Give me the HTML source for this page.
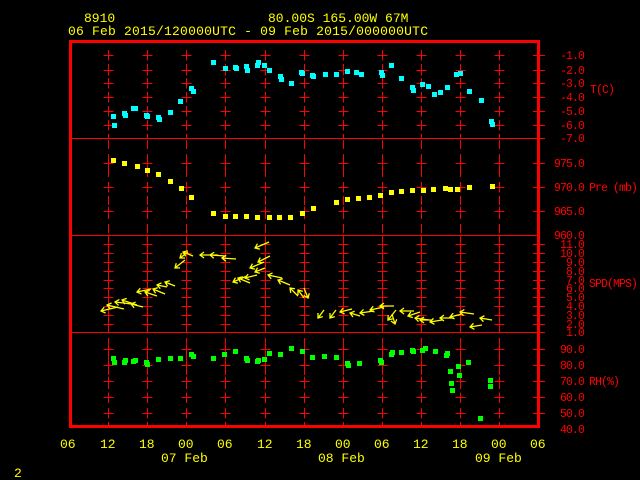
<!DOCTYPE html>
<html><head><meta charset="utf-8"><style>
html,body{margin:0;padding:0;background:#000;width:640px;height:480px;overflow:hidden}
svg{display:block}
text{font-family:"Liberation Mono",monospace;font-size:13px}
.ax text{font-size:11.5px;letter-spacing:-0.9px}
</style></head><body>
<svg width="640" height="480" viewBox="0 0 640 480" xmlns="http://www.w3.org/2000/svg">
<g fill="#ffff00">
<text x="84" y="22">8910</text>
<text x="268" y="22">80.00S  165.00W    67M</text>
<text x="68" y="35" textLength="360">06 Feb 2015/120000UTC - 09 Feb 2015/000000UTC</text>
<text x="60" y="448">06</text><text x="100" y="448">12</text><text x="139" y="448">18</text><text x="178" y="448">00</text><text x="217" y="448">06</text><text x="257" y="448">12</text><text x="296" y="448">18</text><text x="335" y="448">00</text><text x="374" y="448">06</text><text x="413" y="448">12</text><text x="452" y="448">18</text><text x="491" y="448">00</text><text x="530" y="448">06</text>
<text x="161" y="462">07 Feb</text><text x="318" y="462">08 Feb</text><text x="475" y="462">09 Feb</text>
<text x="14" y="477">2</text>
</g>
<g id="grid" stroke="#ff0000" stroke-width="1">
<g stroke-dasharray="9,5">
<path d="M108.5 50V138M147.5 50V138M186.5 50V138M225.5 50V138M265.5 50V138M304.5 50V138M343.5 50V138M382.5 50V138M421.5 50V138M460.5 50V138M499.5 50V138"/>
<path d="M108.5 140V235M147.5 140V235M186.5 140V235M225.5 140V235M265.5 140V235M304.5 140V235M343.5 140V235M382.5 140V235M421.5 140V235M460.5 140V235M499.5 140V235"/>
<path d="M108.5 338V427M147.5 338V427M186.5 338V427M225.5 338V427M265.5 338V427M304.5 338V427M343.5 338V427M382.5 338V427M421.5 338V427M460.5 338V427M499.5 338V427"/>
</g>
<path d="M108.5 235V332M147.5 235V332M186.5 235V332M225.5 235V332M265.5 235V332M304.5 235V332M343.5 235V332M382.5 235V332M421.5 235V332M460.5 235V332M499.5 235V332"/>
<path d="M70 235.5H538M70 138.5H545M70 332.5H545"/>
</g>
<g stroke="#ff0000" stroke-width="1" id="ticks"></g>
<rect x="70.5" y="41.5" width="468" height="385" fill="none" stroke="#ff0000" stroke-width="3"/>
<g fill="#ff0000" class="ax" text-anchor="end">
<text x="584" y="59">-1.0</text><text x="584" y="74">-2.0</text><text x="584" y="87">-3.0</text><text x="584" y="101">-4.0</text><text x="584" y="115">-5.0</text><text x="584" y="129">-6.0</text><text x="584" y="142">-7.0</text>
<text x="584" y="167">975.0</text><text x="584" y="191">970.0</text><text x="584" y="215">965.0</text><text x="584" y="239">960.0</text>
<text x="584" y="248">11.0</text><text x="584" y="257">10.0</text><text x="584" y="266">9.0</text><text x="584" y="275">8.0</text><text x="584" y="284">7.0</text><text x="584" y="292">6.0</text><text x="584" y="301">5.0</text><text x="584" y="310">4.0</text><text x="584" y="319">3.0</text><text x="584" y="328">2.0</text><text x="584" y="336">1.0</text>
<text x="584" y="353">90.0</text><text x="584" y="369">80.0</text><text x="584" y="385">70.0</text><text x="584" y="401">60.0</text><text x="584" y="417">50.0</text><text x="584" y="433">40.0</text>
</g>
<g fill="#ff0000" class="ax">
<text x="590" y="93">T(C)</text>
<text x="589" y="191">Pre (mb)</text>
<text x="589" y="287">SPD(MPS)</text>
<text x="589" y="385">RH(%)</text>
</g>
<g id="pts"></g>
<g id="wind" stroke="#ffff00" stroke-width="1.3" fill="none"></g>
</svg>
<script>
var NS="http://www.w3.org/2000/svg";
var gx=[108.5,147.5,186.5,225.5,265.5,304.5,343.5,382.5,421.5,460.5,499.5];
var ys=[55,70,83,97,111,125,163,187,211,244,253,262,271,280,288,297,306,315,324,349,365,381,397,413];
var t=document.getElementById('ticks'),d="";
ys.forEach(function(y){y+=.5;gx.forEach(function(x){d+="M"+(x-5)+" "+y+"H"+(x+5)+"M"+x+" "+(y-5)+"V"+(y+5);});d+="M533 "+y+"H545";});
var p=document.createElementNS(NS,'path');p.setAttribute('d',d);t.appendChild(p);
var pts=document.getElementById('pts');
function sq(arr,c){arr.forEach(function(a){var r=document.createElementNS(NS,'rect');r.setAttribute('x',a[0]-2);r.setAttribute('y',a[1]-2);r.setAttribute('width',5);r.setAttribute('height',5);r.setAttribute('fill',c);pts.appendChild(r);});}
sq([[113,116],[114,125],[124,113],[125,115],[133,108],[135,108],[146,115],[147,116],[158,117],[159,119],[170,112],[180,101],[191,88],[193,91],[213,62],[225,68],[235,67],[236,68],[246,66],[247,70],[257,65],[258,62],[264,65],[269,70],[280,76],[281,79],[291,83],[301,72],[302,73],[312,75],[313,76],[325,74],[336,74],[347,71],[356,72],[361,74],[381,72],[382,75],[391,65],[401,78],[412,87],[413,90],[422,84],[428,86],[434,94],[440,92],[447,87],[456,74],[460,73],[469,91],[481,100],[491,121],[492,124]],"#00ffff");
sq([[113,160],[124,163],[137,166],[147,170],[158,174],[170,181],[181,188],[191,197],[213,213],[225,216],[235,216],[246,216],[257,217],[269,217],[279,217],[290,217],[302,213],[313,208],[336,202],[347,199],[358,198],[369,197],[380,195],[391,192],[401,191],[412,190],[423,190],[433,189],[445,188],[450,189],[457,189],[469,187],[492,186]],"#ffff00");
sq([[113,358],[114,362],[124,362],[125,360],[133,361],[135,360],[146,362],[147,364],[158,359],[170,358],[180,358],[191,354],[193,356],[213,358],[224,354],[235,351],[246,358],[247,360],[257,361],[258,360],[264,359],[269,353],[280,354],[291,348],[302,351],[312,357],[324,356],[336,357],[347,363],[348,365],[359,363],[380,360],[381,362],[391,354],[392,352],[401,352],[412,350],[413,351],[422,350],[425,348],[435,351],[446,355],[447,353],[450,371],[451,383],[452,390],[458,366],[459,375],[468,362],[490,380],[490,386],[480,418]],"#00ff00");
var w=document.getElementById('wind');
var ar=[[101,311,17,-4],[107,305,17,4],[115,302,17,2],[122,300,15,5],[131,304,12,3],[137,292,14,-3],[145,292,12,4],[153,289,12,5],[157,285,10,2],[165,282,10,4],[175,268,10,-8],[180,258,8,-6],[183,252,10,4],[200,255,18,0],[210,255,16,1],[222,258,14,1],[233,282,14,-6],[238,278,12,5],[245,278,12,-3],[255,272,10,-4],[250,268,14,-6],[255,248,14,-6],[258,262,12,-6],[268,275,14,3],[278,280,12,5],[290,288,8,8],[298,290,6,8],[308,298,-4,-10],[318,318,6,-8],[330,318,6,-8],[340,312,12,-3],[350,313,10,3],[360,313,14,-2],[370,310,14,-3],[380,306,14,0],[388,320,8,-10],[395,324,-3,-10],[400,311,14,0],[408,316,12,-4],[415,318,14,2],[420,320,12,0],[430,322,12,-2],[440,318,14,0],[450,317,12,-3],[460,312,14,2],[470,327,12,-2],[480,318,12,2]];
ar.forEach(function(a){var x=a[0],y=a[1],dx=a[2],dy=a[3],L=Math.sqrt(dx*dx+dy*dy),ux=dx/L,uy=dy/L;
var h=5,hx1=x+h*(ux*.8-uy*.6),hy1=y+h*(uy*.8+ux*.6),hx2=x+h*(ux*.8+uy*.6),hy2=y+h*(uy*.8-ux*.6);
var q=document.createElementNS(NS,'path');q.setAttribute('d',"M"+x+" "+y+"L"+(x+dx)+" "+(y+dy)+"M"+hx1+" "+hy1+"L"+x+" "+y+"L"+hx2+" "+hy2);w.appendChild(q);});
</script>
</body></html>
